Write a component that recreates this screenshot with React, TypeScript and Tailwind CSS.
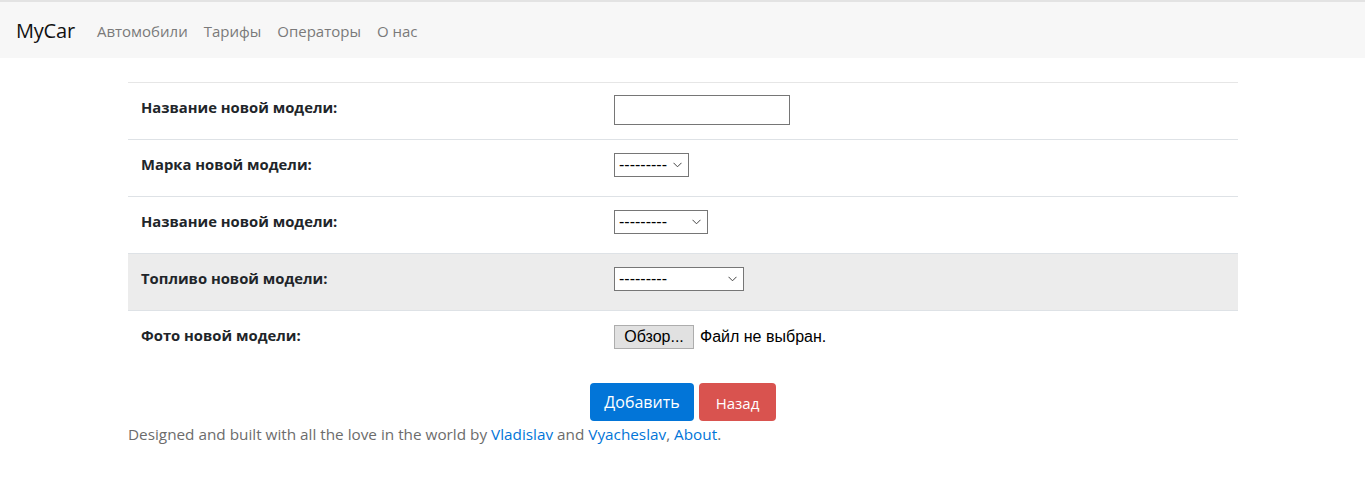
import React from "react";

const Arrow = () => (
  <svg width="9" height="6" viewBox="0 0 9 6" className="shrink-0">
    <path d="M0.5 0.8 L4.5 4.8 L8.5 0.8" fill="none" stroke="#444" strokeWidth="1" />
  </svg>
);

const Select = ({ w }: { w: number }) => (
  <div
    className="mt-[1px] flex items-center justify-between border border-[#767676] bg-white h-[24px] pl-[4px] pr-[6px] text-[16px] leading-[16px] text-black"
    style={{ width: w, fontFamily: '"Liberation Sans", Arial, sans-serif' }}
  >
    <span>---------</span>
    <Arrow />
  </div>
);

const Row = ({ label, children, gray, first }: { label: string; children: React.ReactNode; gray?: boolean; first?: boolean }) => (
  <div className={`flex h-[57px] border-t ${first ? "border-[#e6e6e6]" : "border-[#dee2e6]"} items-start pt-[12px] ${gray ? "bg-[#ececec]" : ""}`}>
    <div className="w-[474px] pl-[13px] font-bold text-[14.8px] leading-[24px] text-[#212529]">{label}</div>
    <div className="pl-[12px] flex items-start">{children}</div>
  </div>
);

export default function App() {
  return (
    <div className="w-[1365px] h-[479px] bg-white" style={{ fontFamily: '"Open Sans", "Noto Sans", sans-serif' }}>
      <div className="h-[58px] bg-[#f7f7f7] border-t-2 border-[#e3e3e3] flex items-center pl-[16px] pt-[2px]">
        <span className="text-[20px] text-[#111] mr-[22px] tracking-[-0.2px]">MyCar</span>
        <nav className="flex gap-[16px] text-[15px] text-[#7a7a7a]">
          <span>Автомобили</span>
          <span>Тарифы</span>
          <span>Операторы</span>
          <span>О нас</span>
        </nav>
      </div>
      <div className="w-[1110px] ml-[128px] mt-[24px]">
        <div>
          <Row label="Название новой модели:" first>
            <div className="w-[176px] h-[30px] border border-[#767676] bg-white" />
          </Row>
          <Row label="Марка новой модели:">
            <Select w={75} />
          </Row>
          <Row label="Название новой модели:">
            <Select w={94} />
          </Row>
          <Row label="Топливо новой модели:" gray>
            <Select w={130} />
          </Row>
          <Row label="Фото новой модели:">
            <div className="mt-[2px] flex items-center gap-[6px]" style={{ fontFamily: '"Liberation Sans", Arial, sans-serif' }}>
              <div className="w-[80px] h-[24px] bg-[#e1e1e1] border border-[#adadad] flex items-center justify-center text-[16px] text-black">
                Обзор...
              </div>
              <span className="text-[16px] text-black">Файл не выбран.</span>
            </div>
          </Row>
        </div>
        <div className="flex justify-center gap-[5px] mt-[16px]">
          <button className="w-[104px] h-[38px] rounded-[4px] bg-[#0275d8] text-white text-[16px]">Добавить</button>
          <button className="w-[77px] h-[38px] rounded-[4px] bg-[#d9534f] text-white text-[15px] pt-[2px]">Назад</button>
        </div>
        <p className="text-[15.3px] text-[#6c6c6c] mt-[2px]">
          Designed and built with all the love in the world by <span className="text-[#0275d8]">Vladislav</span> and{" "}
          <span className="text-[#0275d8]">Vyacheslav</span>, <span className="text-[#0275d8]">About</span>.
        </p>
      </div>
    </div>
  );
}
